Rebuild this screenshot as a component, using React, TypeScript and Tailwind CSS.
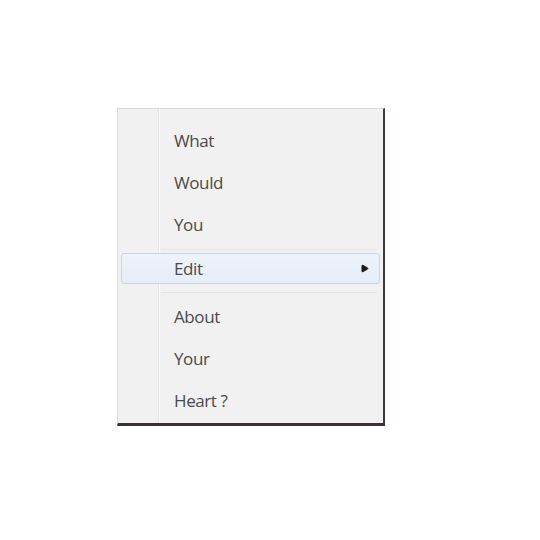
import { Play } from "lucide-react";

const firstGroup = ["What", "Would", "You"];
const secondGroup = ["About", "Your", "Heart ?"];

function Item({ label }: { label: string }) {
  return (
    <div className="flex h-[42px] items-center pl-[56px] text-[17px] font-medium tracking-[-0.4px] text-[#4a4a4a]">
      {label}
    </div>
  );
}

function Separator() {
  return (
    <div className="flex h-[7px] items-center pl-[43px] pr-[6px]">
      <div className="h-px w-full bg-[#e2e4e8]" />
    </div>
  );
}

export default function App() {
  return (
    <div className="min-h-[540px] bg-white pl-[117px] pt-[108px]" style={{ fontFamily: '"Open Sans", "Noto Sans", sans-serif' }}>
      <div className="relative w-[268px] border-l border-t border-[#dadada] border-r-2 border-r-[#3f3840] border-b-[3px] border-b-[#3a3138] bg-[#f1f1f1] pb-[1px] pt-[11px]">
        {/* gutter line */}
        <div className="absolute bottom-0 left-[40px] top-0 w-px bg-[#e3e3e3]" />
        <div className="absolute bottom-0 left-[41px] top-0 w-px bg-[#fafafa]" />

        {firstGroup.map((t) => (
          <Item key={t} label={t} />
        ))}
        <Separator />

        <div className="px-[3px]">
          <div className="relative flex h-[31px] items-center justify-between rounded-[3px] border border-[#c4d5ec] bg-gradient-to-b from-[#eef3fa] to-[#e6edf7] pl-[52px] pr-[10px] text-[17px] font-medium tracking-[-0.4px] text-[#4a4a4a]">
            <span>Edit</span>
            <Play size={9} className="fill-[#1a1a1a] text-[#1a1a1a]" />
          </div>
        </div>

        <div className="h-[5px]" />
        <Separator />

        {secondGroup.map((t) => (
          <Item key={t} label={t} />
        ))}
      </div>
    </div>
  );
}
